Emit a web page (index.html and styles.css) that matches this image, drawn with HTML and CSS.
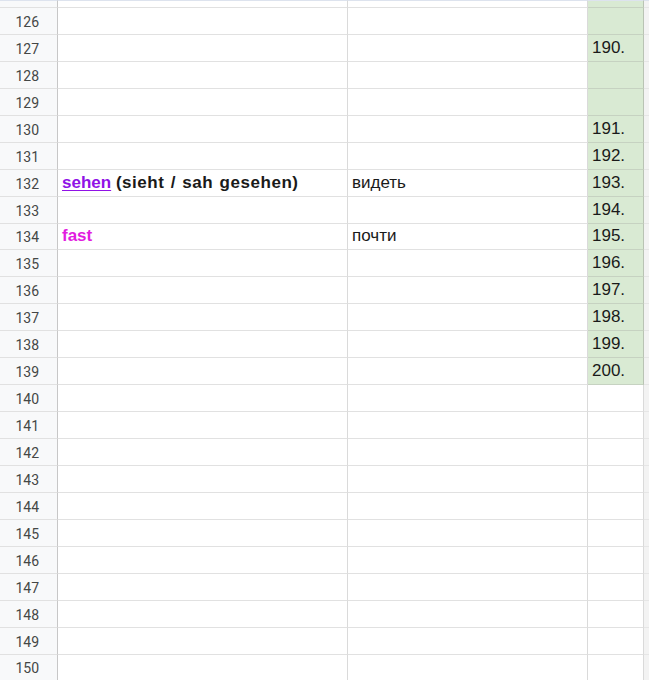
FILE: index.html
```html
<!DOCTYPE html>
<html>
<head>
<meta charset="utf-8">
<link rel="stylesheet" href="styles.css">
</head>
<body>
<div class="sheet">
  <div class="row top"><div class="hdr"></div><div class="c"></div><div class="c"></div><div class="c g"></div><div class="edge"></div></div>
  <div class="row"><div class="hdr">126</div><div class="c"></div><div class="c"></div><div class="c g"></div><div class="edge"></div></div>
  <div class="row"><div class="hdr">127</div><div class="c"></div><div class="c"></div><div class="c g">190.</div><div class="edge"></div></div>
  <div class="row"><div class="hdr">128</div><div class="c"></div><div class="c"></div><div class="c g"></div><div class="edge"></div></div>
  <div class="row"><div class="hdr">129</div><div class="c"></div><div class="c"></div><div class="c g"></div><div class="edge"></div></div>
  <div class="row"><div class="hdr">130</div><div class="c"></div><div class="c"></div><div class="c g">191.</div><div class="edge"></div></div>
  <div class="row"><div class="hdr">131</div><div class="c"></div><div class="c"></div><div class="c g">192.</div><div class="edge"></div></div>
  <div class="row"><div class="hdr">132</div><div class="c b"><span class="link">sehen</span>&nbsp;<span class="rest">(sieht / sah gesehen)</span></div><div class="c">видеть</div><div class="c g">193.</div><div class="edge"></div></div>
  <div class="row"><div class="hdr">133</div><div class="c"></div><div class="c"></div><div class="c g">194.</div><div class="edge"></div></div>
  <div class="row"><div class="hdr">134</div><div class="c b pink">fast</div><div class="c">почти</div><div class="c g">195.</div><div class="edge"></div></div>
  <div class="row"><div class="hdr">135</div><div class="c"></div><div class="c"></div><div class="c g">196.</div><div class="edge"></div></div>
  <div class="row"><div class="hdr">136</div><div class="c"></div><div class="c"></div><div class="c g">197.</div><div class="edge"></div></div>
  <div class="row"><div class="hdr">137</div><div class="c"></div><div class="c"></div><div class="c g">198.</div><div class="edge"></div></div>
  <div class="row"><div class="hdr">138</div><div class="c"></div><div class="c"></div><div class="c g">199.</div><div class="edge"></div></div>
  <div class="row"><div class="hdr">139</div><div class="c"></div><div class="c"></div><div class="c g">200.</div><div class="edge"></div></div>
  <div class="row"><div class="hdr">140</div><div class="c"></div><div class="c"></div><div class="c"></div><div class="edge"></div></div>
  <div class="row"><div class="hdr">141</div><div class="c"></div><div class="c"></div><div class="c"></div><div class="edge"></div></div>
  <div class="row"><div class="hdr">142</div><div class="c"></div><div class="c"></div><div class="c"></div><div class="edge"></div></div>
  <div class="row"><div class="hdr">143</div><div class="c"></div><div class="c"></div><div class="c"></div><div class="edge"></div></div>
  <div class="row"><div class="hdr">144</div><div class="c"></div><div class="c"></div><div class="c"></div><div class="edge"></div></div>
  <div class="row"><div class="hdr">145</div><div class="c"></div><div class="c"></div><div class="c"></div><div class="edge"></div></div>
  <div class="row"><div class="hdr">146</div><div class="c"></div><div class="c"></div><div class="c"></div><div class="edge"></div></div>
  <div class="row"><div class="hdr">147</div><div class="c"></div><div class="c"></div><div class="c"></div><div class="edge"></div></div>
  <div class="row"><div class="hdr">148</div><div class="c"></div><div class="c"></div><div class="c"></div><div class="edge"></div></div>
  <div class="row"><div class="hdr">149</div><div class="c"></div><div class="c"></div><div class="c"></div><div class="edge"></div></div>
  <div class="row"><div class="hdr">150</div><div class="c"></div><div class="c"></div><div class="c"></div><div class="edge"></div></div>
</div>
</body>
</html>
```
FILE: styles.css
```css
html, body {
  margin: 0;
  padding: 0;
  background: #ffffff;
  overflow: hidden;
}
.sheet {
  width: 649px;
  height: 680px;
  overflow: hidden;
  font-family: "Liberation Sans", Arial, sans-serif;
}
.row {
  display: grid;
  grid-template-columns: 58px 290px 240px 56px 5px;
  height: 26.95px;
}
.row.top {
  height: 8px;
}
.row > div {
  box-sizing: border-box;
  border-bottom: 1px solid #e1e1e1;
  border-right: 1px solid #dadada;
  display: flex;
  align-items: flex-end;
  padding-bottom: 3px;
  overflow: hidden;
  white-space: nowrap;
}
.row.top > div {
  border-top: 1px solid #dde3ee;
  padding-bottom: 0;
}
.hdr {
  background: #f8f9fa;
  border-right: 1px solid #c7c7c7 !important;
  justify-content: flex-end;
  padding-right: 18px;
  font-family: Roboto, "Liberation Sans", sans-serif;
  font-size: 14px;
  color: #444746;
  padding-bottom: 4px !important;
}
.c {
  padding-left: 4px;
  font-size: 17px;
  color: #1a1a1a;
}
.c.b {
  font-weight: bold;
}
.rest {
  letter-spacing: 0.55px;
  word-spacing: 1px;
}
.link {
  color: #9012e6;
  text-decoration: underline;
  text-underline-offset: 2px;
}
.pink {
  color: #e21ce0;
}
.c.g {
  background: #d9ead3;
  border-bottom-color: #c6d2c1;
  border-right-color: #b9c3b4;
  padding-left: 4px;
}
.edge {
  background: #f3f3f3;
  border-bottom-color: #e6e6e6 !important;
  border-right: none !important;
}
```
